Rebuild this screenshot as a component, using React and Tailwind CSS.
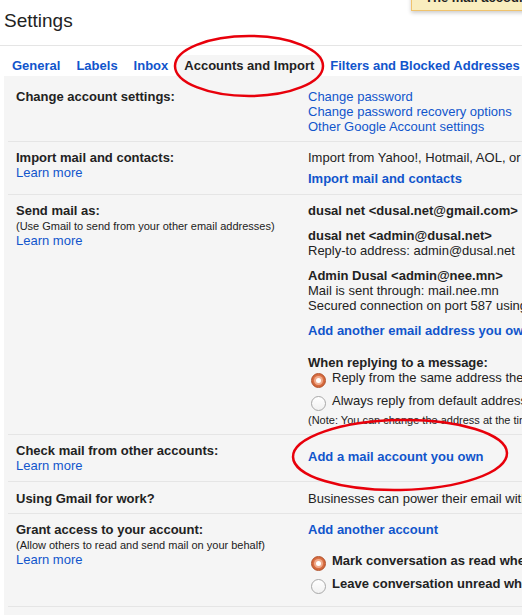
import React from "react";

const link = "text-[#15c]";
const boldLink = "font-bold text-[#15c]";

function Tab({ active, children }) {
  return (
    <div
      className={
        active
          ? "h-[21px] bg-[#f5f5f5] px-2 leading-[21px] text-[#222]"
          : "h-[21px] px-2 leading-[21px] text-[#15c]"
      }
    >
      {children}
    </div>
  );
}

function Radio({ checked, bold, children }) {
  return (
    <div className="flex items-start">
      {checked ? (
        <span className="ml-[3px] mt-[3px] flex h-[15px] w-[15px] shrink-0 items-center justify-center rounded-full border border-[#b24f27] bg-[radial-gradient(circle_at_50%_45%,#e8865c,#c9582b)]">
          <span className="h-[5px] w-[5px] rounded-full bg-white shadow-[0_0_0_2px_#f0ab8c]" />
        </span>
      ) : (
        <span className="ml-[3px] mt-[3px] h-[15px] w-[15px] shrink-0 rounded-full border border-[#a8a8a8] bg-[linear-gradient(#ffffff,#f1f1f1)]" />
      )}
      <span className={bold ? "ml-[6px] font-bold leading-[15px]" : "ml-[6px] leading-[15px]"}>
        {children}
      </span>
    </div>
  );
}

function Row({ pad, left, right }) {
  return (
    <div className={"ml-1 flex whitespace-nowrap border-b border-[#e5e5e5] " + pad}>
      <div className="w-[300px] shrink-0 pl-2">{left}</div>
      <div>{right}</div>
    </div>
  );
}

export default function App() {
  return (
    <div className="relative flex h-[615px] w-full flex-col overflow-hidden bg-white font-['Liberation_Sans',Arial,sans-serif] text-[13px] leading-[15px] text-[#222]">
      {/* notice at top right */}
      <div className="absolute left-[411px] top-[-12px] h-[23px] w-[200px] whitespace-nowrap border border-[#f0c36d] bg-[#f9edbe] pl-[13px] font-bold leading-[17px] shadow-[0_2px_4px_rgba(0,0,0,0.2)]">
        The mail account has been added.
      </div>

      <div className="h-[46px] shrink-0 border-b border-[#e5e5e5] pl-1 pt-[9px]">
        <h1 className="text-[19px] font-normal leading-[24px]">Settings</h1>
      </div>

      <nav className="mt-[9px] flex shrink-0 whitespace-nowrap pl-1 font-bold">
        <Tab>General</Tab>
        <Tab>Labels</Tab>
        <Tab>Inbox</Tab>
        <Tab active>Accounts and Import</Tab>
        <Tab>Filters and Blocked Addresses</Tab>
      </nav>

      <div className="ml-1 flex-1 bg-[#f5f5f5]">
        <Row
          pad="pt-[13px] pb-[7px]"
          left={<div className="font-bold">Change account settings:</div>}
          right={
            <div className={link}>
              <div>Change password</div>
              <div>Change password recovery options</div>
              <div>Other Google Account settings</div>
            </div>
          }
        />
        <Row
          pad="pt-[8px] pb-[8px]"
          left={
            <>
              <div className="font-bold">Import mail and contacts:</div>
              <div className={link}>Learn more</div>
            </>
          }
          right={
            <>
              <div>Import from Yahoo!, Hotmail, AOL, or other webmail or POP3 accounts.</div>
              <div className={"mt-[6px] " + boldLink}>Import mail and contacts</div>
            </>
          }
        />
        <Row
          pad="pt-[8px] pb-[7px]"
          left={
            <>
              <div className="font-bold">Send mail as:</div>
              <div className="mt-[1px] text-[11px] leading-[14px]">
                (Use Gmail to send from your other email addresses)
              </div>
              <div className={link}>Learn more</div>
            </>
          }
          right={
            <>
              <div className="font-bold">dusal net &lt;dusal.net@gmail.com&gt;</div>
              <div className="mt-[10px] font-bold">dusal net &lt;admin@dusal.net&gt;</div>
              <div>Reply-to address: admin@dusal.net</div>
              <div className="mt-[10px] font-bold">Admin Dusal &lt;admin@nee.mn&gt;</div>
              <div>Mail is sent through: mail.nee.mn</div>
              <div>Secured connection on port 587 using TLS</div>
              <div className={"mt-[10px] " + boldLink}>Add another email address you own</div>
              <div className="mt-[17px] font-bold">When replying to a message:</div>
              <Radio checked>Reply from the same address the message was sent to</Radio>
              <div className="mt-[5px]">
                <Radio>Always reply from default address (currently dusal.net@gmail.com)</Radio>
              </div>
              <div className="mt-[2px] text-[11px] leading-[14px]">
                (Note: You can change the address at the time of your reply. Learn more)
              </div>
            </>
          }
        />
        <Row
          pad="pt-[8px] pb-[8px]"
          left={
            <>
              <div className="font-bold">Check mail from other accounts:</div>
              <div className={link}>Learn more</div>
            </>
          }
          right={<div className={"mt-[6px] " + boldLink}>Add a mail account you own</div>}
        />
        <Row
          pad="pt-[9px] pb-[7px]"
          left={<div className="font-bold">Using Gmail for work?</div>}
          right={<div>Businesses can power their email with Gmail for Work.</div>}
        />
        <Row
          pad="pt-[8px] pb-[12px]"
          left={
            <>
              <div className="font-bold">Grant access to your account:</div>
              <div className="mt-[1px] text-[11px] leading-[14px]">
                (Allow others to read and send mail on your behalf)
              </div>
              <div className={link}>Learn more</div>
            </>
          }
          right={
            <>
              <div className={boldLink}>Add another account</div>
              <div className="mt-[16px]">
                <Radio checked bold>Mark conversation as read when opened by others</Radio>
              </div>
              <div className="mt-[5px]">
                <Radio bold>Leave conversation unread when opened by others</Radio>
              </div>
            </>
          }
        />
      </div>

      {/* red hand-drawn annotation ellipses */}
      <svg className="pointer-events-none absolute left-0 top-0" width="522" height="615">
        <ellipse cx="249" cy="66" rx="74" ry="30" fill="none" stroke="#e8000b" strokeWidth="2.5" />
        <ellipse cx="400" cy="455" rx="107" ry="35" fill="none" stroke="#e8000b" strokeWidth="2.5" transform="rotate(-1 400 455)" />
      </svg>
    </div>
  );
}
